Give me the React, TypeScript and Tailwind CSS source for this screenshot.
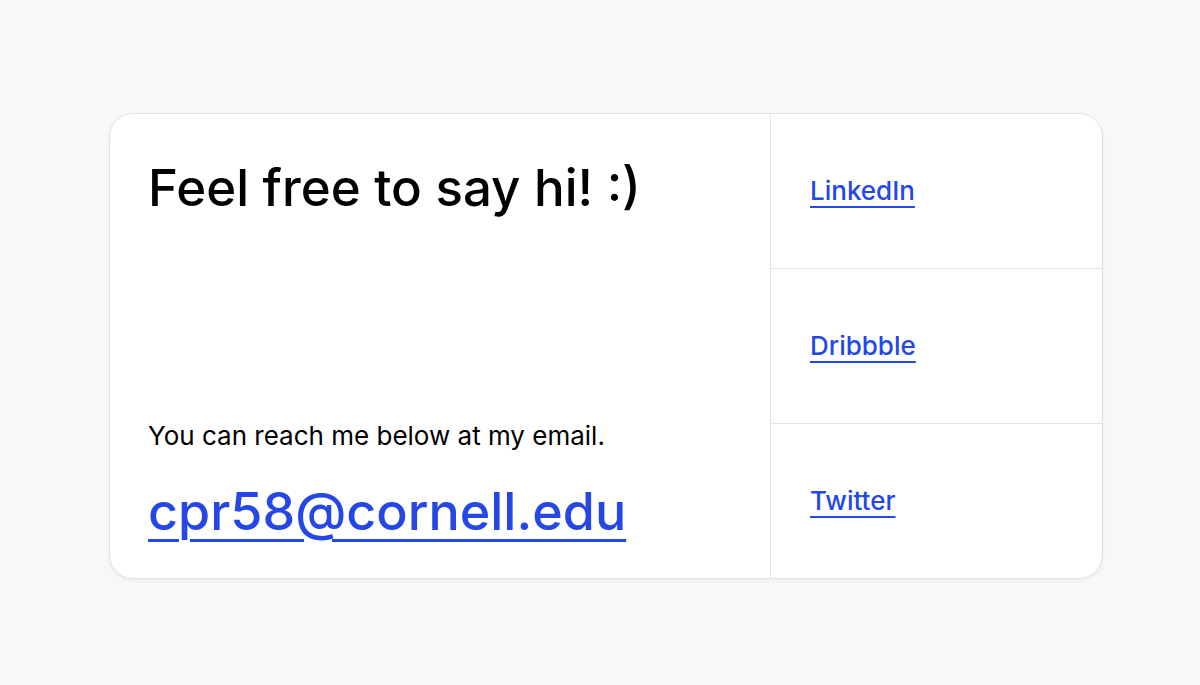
export default function App() {
  const links = ["LinkedIn", "Dribbble", "Twitter"];

  return (
    <div className="min-h-[685px] w-full bg-[#f8f8f8] pt-[113px] pl-[109px] font-['Inter',sans-serif] text-black">
      <div className="flex h-[466px] w-[994px] overflow-hidden rounded-[24px] border border-[#e3e3e3] bg-white shadow-[0_2px_4px_rgba(0,0,0,0.05)]">
        {/* Left */}
        <div className="flex w-[661px] flex-col justify-between border-r border-[#e5e5e5] pl-[38px] pr-10 pt-[44px] pb-[36px]">
          <h1 className="text-[51px] font-medium leading-[60px]">Feel free to say hi! :)</h1>
          <div>
            <p className="text-[26px] leading-[32px]">You can reach me below at my email.</p>
            <a
              href="#"
              className="mt-[30px] inline-block text-[52px] font-medium leading-[60px] text-[#2447e6] underline decoration-[3px] underline-offset-[9px]"
            >
              cpr58@cornell.edu
            </a>
          </div>
        </div>

        {/* Right */}
        <div className="flex flex-1 flex-col">
          {links.map((l, i) => (
            <div
              key={l}
              className={`flex flex-1 items-center pl-[39px] pr-10 ${i < links.length - 1 ? "border-b border-[#e5e5e5]" : ""}`}
            >
              <a
                href="#"
                className="text-[26px] font-medium leading-[32px] text-[#2447e6] underline decoration-2 underline-offset-[6px]"
              >
                {l}
              </a>
            </div>
          ))}
        </div>
      </div>
    </div>
  );
}
